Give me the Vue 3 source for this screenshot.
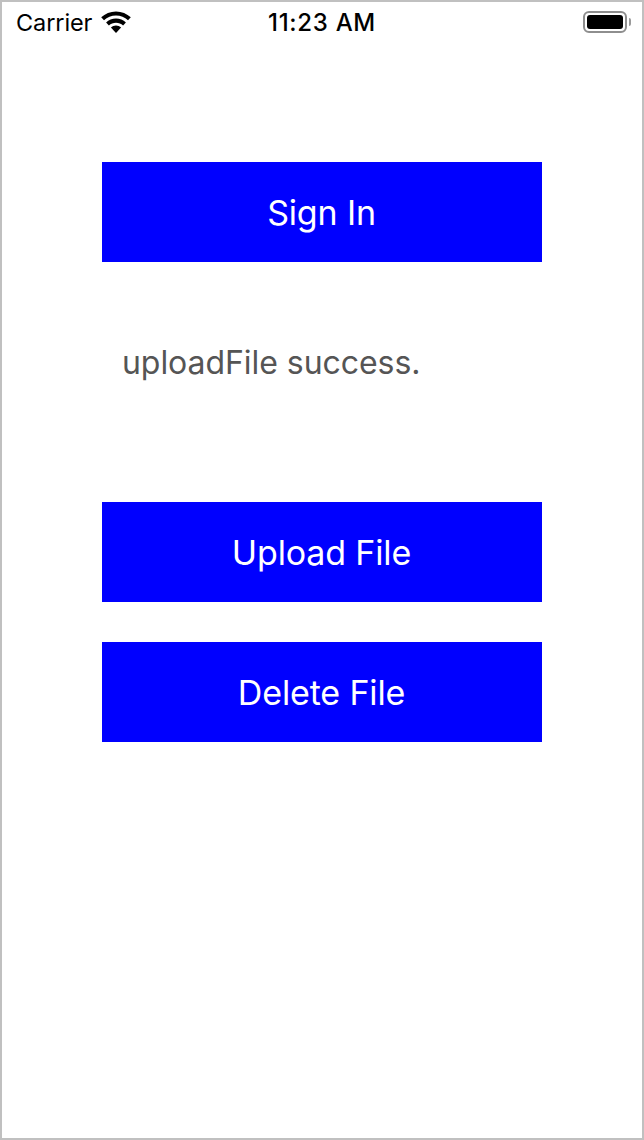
<script setup>
const buttons = { signIn: 'Sign In', upload: 'Upload File', del: 'Delete File' }
</script>

<template>
  <div class="frame">
    <div class="status">
      <div class="status-left">
        <span class="carrier">Carrier</span>
        <svg class="wifi" width="32" height="24" viewBox="0 0 32 24">
          <path d="M16 2.400c5.700 0 10.900 2.200 14.800 5.900l-2.800 3C24.800 8.300 20.600 6.500 16 6.500S7.200 8.300 4 11.300l-2.800-3C5.100 4.600 10.300 2.400 16 2.400z" fill="#000"/>
          <path d="M16 9.600c3.800 0 7.300 1.500 9.900 3.900l-2.800 2.900C21.200 14.700 18.700 13.700 16 13.700s-5.200 1-7.100 2.700l-2.800-2.900C8.700 11.100 12.200 9.600 16 9.600z" fill="#000"/>
          <path d="M16 16.600c2 0 3.800 .8 5.100 2L16 24l-5.100-5.400c1.300-1.200 3.100-2 5.100-2z" fill="#000"/>
        </svg>
      </div>
      <span class="time">11:23 AM</span>
      <div class="battery">
        <div class="battery-body"><div class="battery-fill"></div></div>
        <div class="battery-cap"></div>
      </div>
    </div>
    <main class="content">
      <button class="action">{{ buttons.signIn }}</button>
      <p class="message">uploadFile success.</p>
      <button class="action">{{ buttons.upload }}</button>
      <button class="action second">{{ buttons.del }}</button>
    </main>
  </div>
</template>

<style>
html, body { margin: 0; padding: 0; background: #fff; }
</style>

<style scoped>
.frame {
  box-sizing: border-box;
  width: 644px;
  height: 1140px;
  border: 2px solid #c0c0c0;
  background: #fff;
  font-family: Inter, "Liberation Sans", sans-serif;
  display: flex;
  flex-direction: column;
}
.status {
  box-sizing: border-box;
  height: 38px;
  display: grid;
  grid-template-columns: 1fr auto 1fr;
  align-items: center;
  padding: 4px 11px 0;
  color: #000;
}
.status-left { display: flex; align-items: center; gap: 8px; margin-left: 3px; }
.carrier { font-size: 23.500px; line-height: 34px; letter-spacing: -0.100px; }
.wifi { display: block; margin-top: -4px; }
.time { font-size: 24px; font-weight: 500; line-height: 34px; letter-spacing: 0.700px; }
.battery { justify-self: end; display: flex; align-items: center; margin-top: -2px; }
.battery-body {
  box-sizing: border-box;
  width: 44px;
  height: 22px;
  border: 2px solid #8e8e8e;
  border-radius: 6px;
  padding: 2px;
}
.battery-fill { width: 100%; height: 100%; background: #000; border-radius: 3px; }
.battery-cap { width: 2px; height: 8px; margin-left: 2px; background: #9a9a9a; border-radius: 0 2px 2px 0; }
.content {
  display: flex;
  flex-direction: column;
  align-items: center;
  padding-top: 122px;
}
.action {
  width: 440px;
  height: 100px;
  border: 0;
  padding: 0 1px 0 0;
  background: #0000ff;
  color: #fff;
  font-family: inherit;
  font-size: 34px;
  font-weight: 400;
  letter-spacing: -0.150px;
}
.second { margin-top: 40px; }
.message {
  box-sizing: border-box;
  width: 440px;
  height: 240px;
  margin: 0;
  padding: 76px 0 0 20px;
  font-size: 32px;
  line-height: 50px;
  letter-spacing: -0.050px;
  color: #555;
}
</style>
